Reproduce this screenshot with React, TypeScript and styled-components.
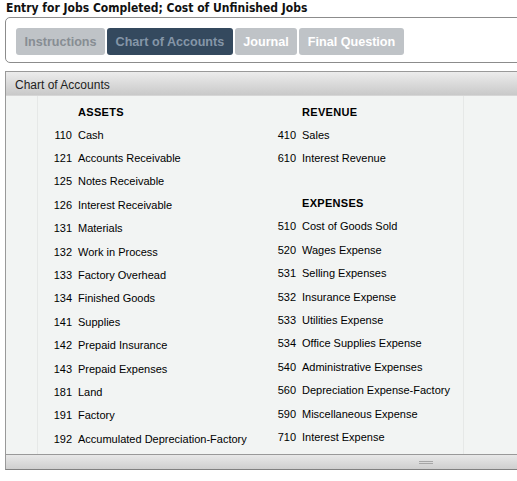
import React from 'react';
import styled, {createGlobalStyle} from 'styled-components';

const GlobalStyle = createGlobalStyle`
  html, body {
    margin: 0;
    padding: 0;
    background: #fff;
    overflow: hidden;
  }
  body {
    font-family: "Liberation Sans", Arial, sans-serif;
    color: #000;
  }
`;

const Page = styled.div`
  width: 540px;
  padding: 0 0 0 5px;
`;

const Title = styled.h1`
  margin: 0;
  padding: 1px 0 0 1px;
  height: 16px;
  font-family: "DejaVu Sans Condensed", "Liberation Sans", sans-serif;
  font-size: 12px;
  font-weight: bold;
  line-height: 14px;
  color: #111;
`;

const TabBox = styled.div`
  display: flex;
  gap: 2px;
  padding: 10px 10px 7px;
  border: 1px solid #8c8c8c;
  border-radius: 5px;
`;

const Tab = styled.div<{$active?: boolean; $dim?: boolean}>`
  height: 27px;
  padding: 0 8.5px;
  display: flex;
  align-items: center;
  border-radius: 3px;
  font-size: 12.6px;
  font-weight: bold;
  background: ${p => (p.$active ? '#34495e' : '#bfc3c7')};
  color: ${p => (p.$active ? '#8596a8' : p.$dim ? '#878d93' : '#ffffff')};
`;

const Panel = styled.div`
  margin-top: 8px;
  border: 1px solid #999;
  border-bottom-color: #808080;
  border-right: none;
`;

const PanelHeader = styled.div`
  height: 23px;
  padding: 2px 0 0 9px;
  box-sizing: border-box;
  display: flex;
  align-items: center;
  font-size: 12px;
  color: #222;
  background: linear-gradient(to bottom, #ececec, #c9c9c9);
  border-bottom: 1px solid #d6d6d6;
  height: 24px;
`;

const PanelBody = styled.div`
  display: flex;
  background: #f2f4f3;
`;

const Gutter = styled.div`
  width: 31px;
  border-right: 1px solid #e6e8e7;
`;

const Content = styled.div`
  width: 411px;
  padding: 4px 0 4px 14px;
  display: flex;
  border-right: 1px solid #e6e8e7;
`;

const Column = styled.div<{$width?: number}>`
  width: ${p => (p.$width ? `${p.$width}px` : 'auto')};
  display: flex;
  flex-direction: column;
`;

const Heading = styled.div`
  height: 23px;
  padding-left: 26px;
  display: flex;
  align-items: center;
  font-size: 11px;
  font-weight: bold;
  letter-spacing: 0.3px;
  color: #000;
`;

const Row = styled.div`
  height: 23.4px;
  display: flex;
  align-items: center;
  font-size: 11px;
  color: #000;
`;

const Num = styled.span`
  width: 20px;
  margin-right: 6px;
  text-align: right;
`;

const Spacer = styled.div`
  height: 22px;
`;

const Footer = styled.div`
  height: 14px;
  border-top: 1px solid #999;
  background: linear-gradient(to bottom, #e8e8e8, #cfcfcf);
  display: flex;
  align-items: center;
  padding-left: 413px;
`;

const Grip = styled.div`
  width: 14px;
  height: 3px;
  border-top: 1px solid #a6a6a6;
  border-bottom: 1px solid #a6a6a6;
  box-sizing: border-box;
`;

const assets: [string, string][] = [
  ['110', 'Cash'],
  ['121', 'Accounts Receivable'],
  ['125', 'Notes Receivable'],
  ['126', 'Interest Receivable'],
  ['131', 'Materials'],
  ['132', 'Work in Process'],
  ['133', 'Factory Overhead'],
  ['134', 'Finished Goods'],
  ['141', 'Supplies'],
  ['142', 'Prepaid Insurance'],
  ['143', 'Prepaid Expenses'],
  ['181', 'Land'],
  ['191', 'Factory'],
  ['192', 'Accumulated Depreciation-Factory'],
];

const revenue: [string, string][] = [
  ['410', 'Sales'],
  ['610', 'Interest Revenue'],
];

const expenses: [string, string][] = [
  ['510', 'Cost of Goods Sold'],
  ['520', 'Wages Expense'],
  ['531', 'Selling Expenses'],
  ['532', 'Insurance Expense'],
  ['533', 'Utilities Expense'],
  ['534', 'Office Supplies Expense'],
  ['540', 'Administrative Expenses'],
  ['560', 'Depreciation Expense-Factory'],
  ['590', 'Miscellaneous Expense'],
  ['710', 'Interest Expense'],
];

const Accounts = ({items}: {items: [string, string][]}) => (
  <>
    {items.map(([n, name]) => (
      <Row key={n}>
        <Num>{n}</Num>
        {name}
      </Row>
    ))}
  </>
);

const App: React.FC = () => {
  return (
    <Page>
      <GlobalStyle />
      <Title>Entry for Jobs Completed; Cost of Unfinished Jobs</Title>
      <TabBox>
        <Tab $dim>Instructions</Tab>
        <Tab $active>Chart of Accounts</Tab>
        <Tab>Journal</Tab>
        <Tab>Final Question</Tab>
      </TabBox>
      <Panel>
        <PanelHeader>Chart of Accounts</PanelHeader>
        <PanelBody>
          <Gutter />
          <Content>
            <Column $width={224}>
              <Heading>ASSETS</Heading>
              <Accounts items={assets} />
            </Column>
            <Column>
              <Heading>REVENUE</Heading>
              <Accounts items={revenue} />
              <Spacer />
              <Heading>EXPENSES</Heading>
              <Accounts items={expenses} />
            </Column>
          </Content>
        </PanelBody>
        <Footer>
          <Grip />
        </Footer>
      </Panel>
    </Page>
  );
};

export default App;
